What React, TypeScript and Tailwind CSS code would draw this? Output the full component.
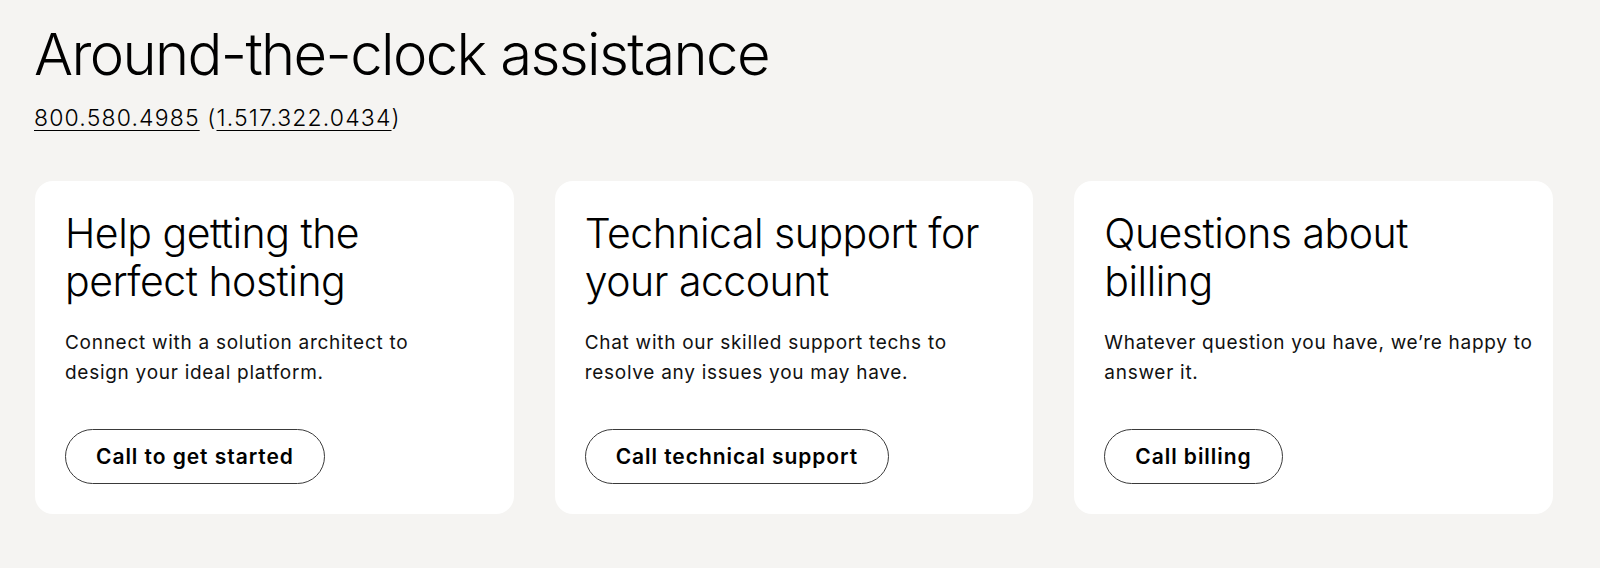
const cards = [
  {
    title: "Help getting the perfect hosting",
    body: ["Connect with a solution architect to", "design your ideal platform."],
    cta: "Call to get started",
  },
  {
    title: "Technical support for your account",
    body: ["Chat with our skilled support techs to", "resolve any issues you may have."],
    cta: "Call technical support",
  },
  {
    title: "Questions about billing",
    body: ["Whatever question you have, we’re happy to", "answer it."],
    cta: "Call billing",
  },
];

const App = () => {
  return (
    <div className="min-h-[568px] bg-[#f5f4f2] text-black font-['Inter','Liberation_Sans',sans-serif] pl-[34px] pt-[25px]">
      <h1 className="text-[58px] leading-none font-light tracking-[-0.028em]">
        Around-the-clock assistance
      </h1>
      <p className="mt-[24px] text-[23px] leading-none font-light tracking-[0.05em]">
        <a href="#" className="underline underline-offset-[4px] decoration-1">
          800.580.4985
        </a>{" "}
        (
        <a href="#" className="underline underline-offset-[4px] decoration-1">
          1.517.322.0434
        </a>
        )
      </p>

      <div className="mt-[51px] ml-px grid grid-cols-3 gap-[41px] w-[1518px]">
        {cards.map((card) => (
          <div
            key={card.cta}
            className="bg-white rounded-[18px] px-[30px] pt-7 pb-[30px] flex flex-col items-start"
          >
            <h2 className="max-w-[400px] text-[41px] leading-[48px] font-light tracking-[-0.012em]">
              {card.title}
            </h2>
            <p className="mt-[23px] text-[19px] leading-[30px] tracking-[0.038em] text-[#111] whitespace-nowrap">
              {card.body[0]}
              <br />
              {card.body[1]}
            </p>
            <button className="mt-[41px] h-[55px] px-[30px] rounded-full border border-[#3a3a3a] text-[21px] font-semibold tracking-[0.045em]">
              {card.cta}
            </button>
          </div>
        ))}
      </div>
    </div>
  );
};

export default App;
